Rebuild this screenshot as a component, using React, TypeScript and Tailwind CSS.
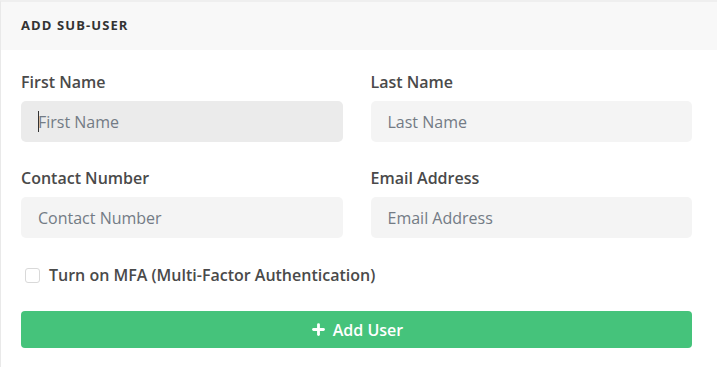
import { Plus } from "lucide-react";

const font = { fontFamily: "'Open Sans', 'Noto Sans', sans-serif" };

function Field({ label, placeholder, focused }: { label: string; placeholder: string; focused?: boolean }) {
  return (
    <div className="flex flex-col">
      <label className="text-[16px] leading-5 font-semibold text-[#4a4a4a] mb-[9px]">{label}</label>
      <div className="relative">
        <input
          placeholder={placeholder}
          className={`w-full h-[41px] rounded-[5px] px-[17px] text-[16px] text-[#444] placeholder:text-[#737b85] outline-none ${
            focused ? "bg-[#ebebeb]" : "bg-[#f4f4f4]"
          }`}
        />
        {focused && <span className="absolute left-[17px] top-[10px] h-[21px] w-px bg-[#333]" />}
      </div>
    </div>
  );
}

export default function App() {
  return (
    <div className="w-[717px] h-[367px] bg-white overflow-hidden" style={font}>
      <div className="border-l border-[#e9e9e9] border-t-2 border-t-[#efefef] h-full">
        <div className="h-[48px] bg-[#f8f8f8] flex items-center pl-5">
          <h2 className="text-[13px] font-bold tracking-[1.1px] text-[#333]">ADD SUB-USER</h2>
        </div>
        <div className="pl-5 pr-[25px] pt-[22px]">
          <div className="grid grid-cols-2 gap-x-7 gap-y-[26px]">
            <Field label="First Name" placeholder="First Name" focused />
            <Field label="Last Name" placeholder="Last Name" />
            <Field label="Contact Number" placeholder="Contact Number" />
            <Field label="Email Address" placeholder="Email Address" />
          </div>
          <label className="flex items-center gap-[9px] mt-[27px] pl-1">
            <span className="w-[15px] h-[15px] rounded-[3px] border border-[#d9d9d9] bg-white" />
            <span className="text-[16px] leading-5 font-semibold text-[#4a4a4a]">
              Turn on MFA (Multi-Factor Authentication)
            </span>
          </label>
          <button className="mt-[26px] w-full h-[37px] rounded-[4px] bg-[#45c37b] text-white text-[16px] font-semibold flex items-center justify-center gap-[6px]">
            <Plus size={17} strokeWidth={4} />
            Add User
          </button>
        </div>
      </div>
    </div>
  );
}
